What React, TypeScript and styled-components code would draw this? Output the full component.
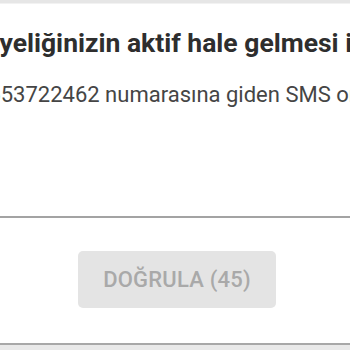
import React from "react";
import styled, { createGlobalStyle } from "styled-components";

const Global = createGlobalStyle`
  html, body { margin: 0; padding: 0; background: #e9e9e9; }
  body { width: 350px; height: 350px; overflow: hidden; font-family: Roboto, "Noto Sans", Arial, sans-serif; }
`;

const Page = styled.div`
  width: 350px;
  height: 350px;
  display: flex;
  flex-direction: column;
  overflow: hidden;
`;

const TopStrip = styled.div`
  height: 3px;
  background: #e6e6e6;
  border-bottom: 1px solid #f2f2f2;
  flex: none;
`;

const Modal = styled.div`
  background: #ffffff;
  display: flex;
  flex-direction: column;
  flex: none;
  height: 339px;
  border-bottom: 2px solid #a8a8a8;
`;

const Body = styled.div`
  height: 214px;
  padding-top: 23px;
  box-sizing: border-box;
  border-bottom: 2px solid #a3a3a3;
  overflow: hidden;
  white-space: nowrap;
`;

const Title = styled.h2`
  margin: 0 0 0 -18px;
  font-size: 26.5px;
  font-weight: 700;
  color: #2e2e2e;
  line-height: 32px;
`;

const Info = styled.p`
  margin: 23px 0 0 -24px;
  font-size: 22px;
  font-weight: 400;
  color: #454545;
  line-height: 26px;
`;

const Footer = styled.div`
  flex: 1;
  display: flex;
  justify-content: center;
  align-items: flex-start;
  padding-top: 33px;
  padding-left: 4px;
`;

const VerifyButton = styled.button`
  width: 198px;
  height: 57px;
  border: none;
  border-radius: 5px;
  background: #e4e4e4;
  color: #a9a9a9;
  font-family: Roboto, "Noto Sans", Arial, sans-serif;
  font-size: 22px;
  font-weight: 500;
  letter-spacing: 0.2px;
`;

export default function App() {
  return (
    <>
      <Global />
      <Page>
        <TopStrip />
        <Modal>
          <Body>
            <Title>Üyeliğinizin aktif hale gelmesi için</Title>
            <Info>0553722462 numarasına giden SMS onay kodunu giriniz.</Info>
          </Body>
          <Footer>
            <VerifyButton disabled>DOĞRULA (45)</VerifyButton>
          </Footer>
        </Modal>
      </Page>
    </>
  );
}
